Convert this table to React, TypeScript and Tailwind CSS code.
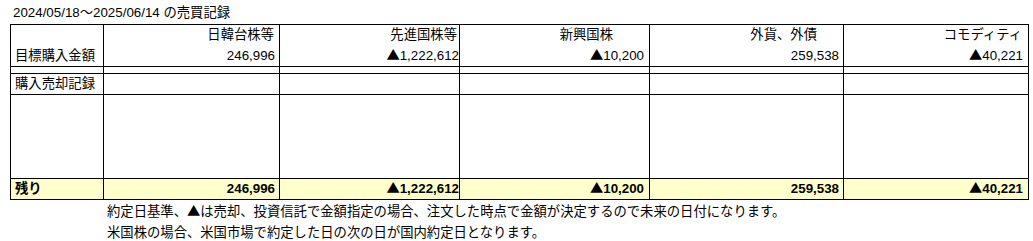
type Col = {
  name: string;
  value: string;
  headPad: string;
  valuePad: string;
};

const cols: Col[] = [
  { name: '日韓台株等', value: '246,996', headPad: 'pr-[5px]', valuePad: 'pr-[4px]' },
  { name: '先進国株等', value: '▲1,222,612', headPad: 'pr-[2px]', valuePad: 'pr-0' },
  { name: '新興国株', value: '▲10,200', headPad: 'pr-[36px]', valuePad: 'pr-[5px]' },
  { name: '外貨、外債', value: '259,538', headPad: 'pr-[26px]', valuePad: 'pr-[4px]' },
  { name: 'コモディティ', value: '▲40,221', headPad: 'pr-[6px]', valuePad: 'pr-[5px]' },
];

// ▲ is drawn full width, as in the sheet
function Tri() {
  return <span className="font-['Noto_Sans_CJK_JP',sans-serif] leading-none">▲</span>;
}

function Amount({ value }: { value: string }) {
  if (value.startsWith('▲')) {
    return (
      <>
        <Tri />
        {value.slice(1)}
      </>
    );
  }
  return <>{value}</>;
}

export default function App() {
  return (
    <div className="w-[1033px] h-[241px] overflow-hidden bg-white text-black text-[13.33px] leading-[20px] font-['Liberation_Sans','Noto_Sans_CJK_JP',sans-serif]">
      <div className="pt-[3px] pl-[13px] h-[24px]">2024/05/18～2025/06/14 の売買記録</div>

      <table className="ml-[10px] w-[1018px] table-fixed border-collapse">
        <colgroup>
          <col className="w-[93px]" />
          <col className="w-[176px]" />
          <col className="w-[180px]" />
          <col className="w-[190px]" />
          <col className="w-[194px]" />
          <col className="w-[185px]" />
        </colgroup>
        <tbody>
          <tr className="h-[21px]">
            <td rowSpan={2} className="border border-black p-0 pl-[4px] align-bottom whitespace-nowrap">
              目標購入金額
            </td>
            {cols.map((c) => (
              <td key={c.name} className={`border-x border-t border-black p-0 text-right whitespace-nowrap ${c.headPad}`}>
                {c.name}
              </td>
            ))}
          </tr>
          <tr className="h-[21px]">
            {cols.map((c) => (
              <td key={c.name} className={`border-x border-b border-black p-0 text-right whitespace-nowrap ${c.valuePad}`}>
                <Amount value={c.value} />
              </td>
            ))}
          </tr>
          <tr className="h-[7px]">
            <td className="border border-black p-0" />
            {cols.map((c) => (
              <td key={c.name} className="border border-black p-0" />
            ))}
          </tr>
          <tr className="h-[21px]">
            <td className="border border-black p-0 pl-[4px] whitespace-nowrap">購入売却記録</td>
            {cols.map((c) => (
              <td key={c.name} className="border border-black p-0" />
            ))}
          </tr>
          <tr className="h-[84px]">
            <td className="border border-black p-0" />
            {cols.map((c) => (
              <td key={c.name} className="border border-black p-0" />
            ))}
          </tr>
          <tr className="h-[21px] bg-[#ffffcc] font-bold">
            <td className="border border-black p-0 pl-[4px] whitespace-nowrap">残り</td>
            {cols.map((c) => (
              <td key={c.name} className={`border border-black p-0 text-right whitespace-nowrap ${c.valuePad}`}>
                <Amount value={c.value} />
              </td>
            ))}
          </tr>
        </tbody>
      </table>

      <div className="pl-[107px] pt-[1px]">
        <p className="h-[21px] leading-[21px] whitespace-nowrap">
          約定日基準、<Tri />は売却、投資信託で金額指定の場合、注文した時点で金額が決定するので未来の日付になります。
        </p>
        <p className="h-[21px] leading-[21px] whitespace-nowrap">
          米国株の場合、米国市場で約定した日の次の日が国内約定日となります。
        </p>
      </div>
    </div>
  );
}
